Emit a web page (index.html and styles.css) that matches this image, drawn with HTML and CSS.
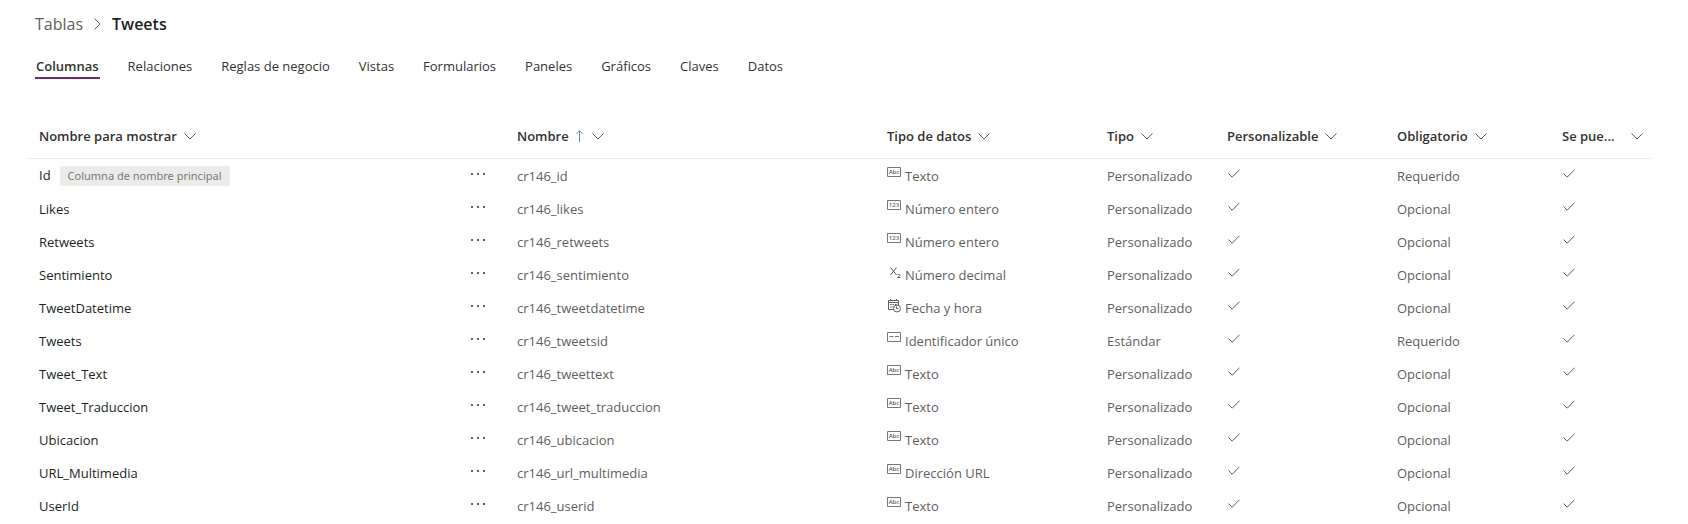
FILE: index.html
```html
<!DOCTYPE html>
<html lang="es">
<head>
<meta charset="utf-8">
<title>Tweets - Tablas</title>
<link rel="stylesheet" href="styles.css">
</head>
<body>
<svg class="sprite" aria-hidden="true">
  <symbol id="chevron" viewBox="0 0 12 7"><path d="M.5.5 6 6 11.500.5"/></symbol>
  <symbol id="check" viewBox="0 0 12 9"><path d="M.5 4.500 4.200 8.200 11.500.7"/></symbol>
  <symbol id="more" viewBox="0 0 16 2"><path class="solid" d="M1 0h2v2H1zM7 0h2v2H7zM13 0h2v2h-2z"/></symbol>
</svg>
<main class="page">
  <nav class="breadcrumb" aria-label="Ruta">
    <a href="#">Tablas</a>
    <svg class="sep" viewBox="0 0 7 12" aria-hidden="true"><path d="M.5.5 6 6 .5 11.500"/></svg>
    <h1>Tweets</h1>
  </nav>
  <div class="tabs" role="tablist">
    <button role="tab" aria-selected="true" class="tab active">Columnas</button>
    <button role="tab" class="tab">Relaciones</button>
    <button role="tab" class="tab">Reglas de negocio</button>
    <button role="tab" class="tab">Vistas</button>
    <button role="tab" class="tab">Formularios</button>
    <button role="tab" class="tab">Paneles</button>
    <button role="tab" class="tab">Gráficos</button>
    <button role="tab" class="tab">Claves</button>
    <button role="tab" class="tab">Datos</button>
  </div>
  <table class="grid">
    <colgroup><col><col class="c-more"><col class="c-name"><col class="c-data"><col class="c-type"><col class="c-custom"><col class="c-req"><col class="c-search"></colgroup>
    <thead>
      <tr>
        <th><button class="head">Nombre para mostrar<svg class="chev"><use href="#chevron"/></svg></button></th>
        <th></th>
        <th><button class="head">Nombre<svg class="arrow" viewBox="0 0 7 12"><path d="M3.500 12V.8M.5 3.800l3-3 3 3"/></svg><svg class="chev"><use href="#chevron"/></svg></button></th>
        <th><button class="head">Tipo de datos<svg class="chev"><use href="#chevron"/></svg></button></th>
        <th><button class="head">Tipo<svg class="chev"><use href="#chevron"/></svg></button></th>
        <th><button class="head">Personalizable<svg class="chev"><use href="#chevron"/></svg></button></th>
        <th><button class="head">Obligatorio<svg class="chev"><use href="#chevron"/></svg></button></th>
        <th class="last"><button class="head wide">Se pue...<svg class="chev"><use href="#chevron"/></svg></button></th>
      </tr>
    </thead>
    <tbody>
      <tr><td class="title">Id<span class="badge">Columna de nombre principal</span></td><td><button class="more" aria-label="Más"><svg><use href="#more"/></svg></button></td><td>cr146_id</td><td><svg class="kind" viewBox="0 0 14 14"><path d="M.5.5h13v9H.5z"/><text x="7" y="7" text-anchor="middle">Abc</text></svg>Texto</td><td>Personalizado</td><td><svg class="check"><use href="#check"/></svg></td><td>Requerido</td><td><svg class="check"><use href="#check"/></svg></td></tr>
      <tr><td class="title">Likes</td><td><button class="more" aria-label="Más"><svg><use href="#more"/></svg></button></td><td>cr146_likes</td><td><svg class="kind" viewBox="0 0 14 14"><path d="M.5.5h13v9H.5z"/><text x="7" y="7" text-anchor="middle">123</text></svg>Número entero</td><td>Personalizado</td><td><svg class="check"><use href="#check"/></svg></td><td>Opcional</td><td><svg class="check"><use href="#check"/></svg></td></tr>
      <tr><td class="title">Retweets</td><td><button class="more" aria-label="Más"><svg><use href="#more"/></svg></button></td><td>cr146_retweets</td><td><svg class="kind" viewBox="0 0 14 14"><path d="M.5.5h13v9H.5z"/><text x="7" y="7" text-anchor="middle">123</text></svg>Número entero</td><td>Personalizado</td><td><svg class="check"><use href="#check"/></svg></td><td>Opcional</td><td><svg class="check"><use href="#check"/></svg></td></tr>
      <tr><td class="title">Sentimiento</td><td><button class="more" aria-label="Más"><svg><use href="#more"/></svg></button></td><td>cr146_sentimiento</td><td><svg class="kind dark" viewBox="0 0 14 14"><path d="M3.500 1.500 9.500 9M9.500 1.500 3.500 9M10.500 9c.3-1 2.500-1 2.300.4-.1.800-1.800 1.300-2.300 2.100H13.300"/></svg>Número decimal</td><td>Personalizado</td><td><svg class="check"><use href="#check"/></svg></td><td>Opcional</td><td><svg class="check"><use href="#check"/></svg></td></tr>
      <tr><td class="title">TweetDatetime</td><td><button class="more" aria-label="Más"><svg><use href="#more"/></svg></button></td><td>cr146_tweetdatetime</td><td><svg class="kind dark" viewBox="0 0 14 14"><path d="M6.500 10.500h-5v-9h10V6M1.500 3.500h10M3.500 0v2M9.500 0v2M3 5.500h1.500M5.500 5.500H7M8 5.500h1.500M3 8h1.500M5.500 8h1"/><circle cx="10" cy="9.500" r="3.500"/><path d="M9.500 7.500v2h2"/></svg>Fecha y hora</td><td>Personalizado</td><td><svg class="check"><use href="#check"/></svg></td><td>Opcional</td><td><svg class="check"><use href="#check"/></svg></td></tr>
      <tr><td class="title">Tweets</td><td><button class="more" aria-label="Más"><svg><use href="#more"/></svg></button></td><td>cr146_tweetsid</td><td><svg class="kind" viewBox="0 0 14 14"><path d="M.5.5h13v9H.5zM2.500 4.500h4M8 4.500h4"/></svg>Identificador único</td><td>Estándar</td><td><svg class="check"><use href="#check"/></svg></td><td>Requerido</td><td><svg class="check"><use href="#check"/></svg></td></tr>
      <tr><td class="title">Tweet_Text</td><td><button class="more" aria-label="Más"><svg><use href="#more"/></svg></button></td><td>cr146_tweettext</td><td><svg class="kind" viewBox="0 0 14 14"><path d="M.5.5h13v9H.5z"/><text x="7" y="7" text-anchor="middle">Abc</text></svg>Texto</td><td>Personalizado</td><td><svg class="check"><use href="#check"/></svg></td><td>Opcional</td><td><svg class="check"><use href="#check"/></svg></td></tr>
      <tr><td class="title">Tweet_Traduccion</td><td><button class="more" aria-label="Más"><svg><use href="#more"/></svg></button></td><td>cr146_tweet_traduccion</td><td><svg class="kind" viewBox="0 0 14 14"><path d="M.5.5h13v9H.5z"/><text x="7" y="7" text-anchor="middle">Abc</text></svg>Texto</td><td>Personalizado</td><td><svg class="check"><use href="#check"/></svg></td><td>Opcional</td><td><svg class="check"><use href="#check"/></svg></td></tr>
      <tr><td class="title">Ubicacion</td><td><button class="more" aria-label="Más"><svg><use href="#more"/></svg></button></td><td>cr146_ubicacion</td><td><svg class="kind" viewBox="0 0 14 14"><path d="M.5.5h13v9H.5z"/><text x="7" y="7" text-anchor="middle">Abc</text></svg>Texto</td><td>Personalizado</td><td><svg class="check"><use href="#check"/></svg></td><td>Opcional</td><td><svg class="check"><use href="#check"/></svg></td></tr>
      <tr><td class="title">URL_Multimedia</td><td><button class="more" aria-label="Más"><svg><use href="#more"/></svg></button></td><td>cr146_url_multimedia</td><td><svg class="kind" viewBox="0 0 14 14"><path d="M.5.5h13v9H.5z"/><text x="7" y="7" text-anchor="middle">Abc</text></svg>Dirección URL</td><td>Personalizado</td><td><svg class="check"><use href="#check"/></svg></td><td>Opcional</td><td><svg class="check"><use href="#check"/></svg></td></tr>
      <tr><td class="title">UserId</td><td><button class="more" aria-label="Más"><svg><use href="#more"/></svg></button></td><td>cr146_userid</td><td><svg class="kind" viewBox="0 0 14 14"><path d="M.5.5h13v9H.5z"/><text x="7" y="7" text-anchor="middle">Abc</text></svg>Texto</td><td>Personalizado</td><td><svg class="check"><use href="#check"/></svg></td><td>Opcional</td><td><svg class="check"><use href="#check"/></svg></td></tr>
    </tbody>
  </table>
</main>
</body>
</html>
```

FILE: styles.css
```css
* { box-sizing: border-box; }
body {
  margin: 0;
  background: #fff;
  color: #605e5c;
  font: 13px/20px "Open Sans", "Noto Sans", sans-serif;
}
button {
  margin: 0;
  padding: 0;
  border: 0;
  background: none;
  color: inherit;
  font: inherit;
  cursor: pointer;
}
svg { fill: none; stroke: currentColor; }
.sprite { position: absolute; width: 0; height: 0; }
.solid { fill: currentColor; stroke: none; }
.page { padding: 12px 37px 0 27px; }
.breadcrumb {
  display: flex;
  align-items: center;
  gap: 11px;
  padding-left: 8px;
  font-size: 16px;
  line-height: 24px;
}
.breadcrumb a { color: #605e5c; text-decoration: none; }
.breadcrumb h1 {
  margin: 0;
  color: #201f1e;
  font-size: 16px;
  font-weight: 600;
}
.sep { width: 7px; height: 12px; }
.tabs {
  display: flex;
  gap: 27px;
  padding: 18px 0 0 8px;
}
.tab {
  padding: 2px 1px 1px;
  border-bottom: 2px solid transparent;
  color: #323130;
}
.tab.active {
  border-bottom-color: #742774;
  font-weight: 600;
}
.grid {
  width: 100%;
  margin-top: 36px;
  table-layout: fixed;
  border-collapse: collapse;
}
.c-more { width: 48px; }
.c-name { width: 370px; }
.c-data { width: 220px; }
.c-type { width: 120px; }
.c-custom { width: 170px; }
.c-req { width: 165px; }
.c-search { width: 101px; }
th, td {
  padding: 0 12px;
  text-align: left;
  white-space: nowrap;
}
th {
  height: 43px;
  border-bottom: 1px solid #edebe9;
  color: #323130;
  font-weight: 600;
}
th.last { padding-right: 8px; }
td { height: 33px; padding-top: 2px; }
.title { color: #201f1e; }
.head {
  display: flex;
  align-items: center;
  gap: 7px;
}
.wide { width: 100%; justify-content: space-between; }
.chev { width: 12px; height: 7px; color: #605e5c; }
.arrow { width: 7px; height: 12px; margin-right: 2px; color: #4a8fc4; }
.badge {
  display: inline-block;
  margin-left: 9px;
  padding: 0 8px;
  border-radius: 2px;
  background: #edebe9;
  color: #797775;
  font-family: "Noto Sans", sans-serif;
  font-size: 11px;
}
.more { display: block; padding: 0 0 4px 1px; }
.more svg { display: block; width: 16px; height: 2px; }
.kind {
  width: 14px;
  height: 14px;
  margin-right: 4px;
  color: #797775;
}
.kind.dark { color: #605e5c; }
.kind text {
  fill: #605e5c;
  stroke: none;
  font-size: 6px;
  font-weight: 600;
}
.check { display: block; width: 12px; height: 9px; margin: 0 0 4px 1px; }
```
